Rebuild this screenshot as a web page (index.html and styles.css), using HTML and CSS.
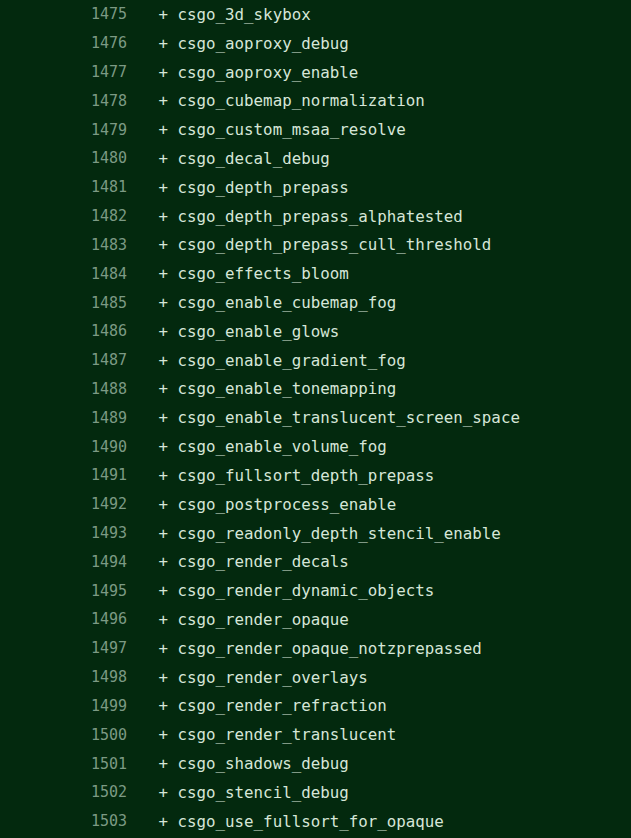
FILE: index.html
```html
<!DOCTYPE html>
<html>
<head>
<meta charset="utf-8">
<link rel="stylesheet" href="styles.css">
</head>
<body>
<div class="diff">
  <div class="row"><span class="num">1475</span><span class="code">+ csgo_3d_skybox</span></div>
  <div class="row"><span class="num">1476</span><span class="code">+ csgo_aoproxy_debug</span></div>
  <div class="row"><span class="num">1477</span><span class="code">+ csgo_aoproxy_enable</span></div>
  <div class="row"><span class="num">1478</span><span class="code">+ csgo_cubemap_normalization</span></div>
  <div class="row"><span class="num">1479</span><span class="code">+ csgo_custom_msaa_resolve</span></div>
  <div class="row"><span class="num">1480</span><span class="code">+ csgo_decal_debug</span></div>
  <div class="row"><span class="num">1481</span><span class="code">+ csgo_depth_prepass</span></div>
  <div class="row"><span class="num">1482</span><span class="code">+ csgo_depth_prepass_alphatested</span></div>
  <div class="row"><span class="num">1483</span><span class="code">+ csgo_depth_prepass_cull_threshold</span></div>
  <div class="row"><span class="num">1484</span><span class="code">+ csgo_effects_bloom</span></div>
  <div class="row"><span class="num">1485</span><span class="code">+ csgo_enable_cubemap_fog</span></div>
  <div class="row"><span class="num">1486</span><span class="code">+ csgo_enable_glows</span></div>
  <div class="row"><span class="num">1487</span><span class="code">+ csgo_enable_gradient_fog</span></div>
  <div class="row"><span class="num">1488</span><span class="code">+ csgo_enable_tonemapping</span></div>
  <div class="row"><span class="num">1489</span><span class="code">+ csgo_enable_translucent_screen_space</span></div>
  <div class="row"><span class="num">1490</span><span class="code">+ csgo_enable_volume_fog</span></div>
  <div class="row"><span class="num">1491</span><span class="code">+ csgo_fullsort_depth_prepass</span></div>
  <div class="row"><span class="num">1492</span><span class="code">+ csgo_postprocess_enable</span></div>
  <div class="row"><span class="num">1493</span><span class="code">+ csgo_readonly_depth_stencil_enable</span></div>
  <div class="row"><span class="num">1494</span><span class="code">+ csgo_render_decals</span></div>
  <div class="row"><span class="num">1495</span><span class="code">+ csgo_render_dynamic_objects</span></div>
  <div class="row"><span class="num">1496</span><span class="code">+ csgo_render_opaque</span></div>
  <div class="row"><span class="num">1497</span><span class="code">+ csgo_render_opaque_notzprepassed</span></div>
  <div class="row"><span class="num">1498</span><span class="code">+ csgo_render_overlays</span></div>
  <div class="row"><span class="num">1499</span><span class="code">+ csgo_render_refraction</span></div>
  <div class="row"><span class="num">1500</span><span class="code">+ csgo_render_translucent</span></div>
  <div class="row"><span class="num">1501</span><span class="code">+ csgo_shadows_debug</span></div>
  <div class="row"><span class="num">1502</span><span class="code">+ csgo_stencil_debug</span></div>
  <div class="row"><span class="num">1503</span><span class="code">+ csgo_use_fullsort_for_opaque</span></div>
</div>
</body>
</html>
```
FILE: styles.css
```css
html, body {
  margin: 0;
  padding: 0;
  background: #03290e;
  height: 100%;
  overflow: hidden;
}
.diff {
  display: flex;
  flex-direction: column;
  font-family: "DejaVu Sans Mono", "Liberation Mono", monospace;
}
.row {
  display: flex;
  align-items: center;
  height: 28.82px;
  white-space: pre;
}
.num {
  width: 127px;
  text-align: right;
  font-size: 15px;
  color: #7c9a84;
}
.code {
  margin-left: 31.5px;
  font-size: 15.8px;
  color: #d6e6d8;
}
```
